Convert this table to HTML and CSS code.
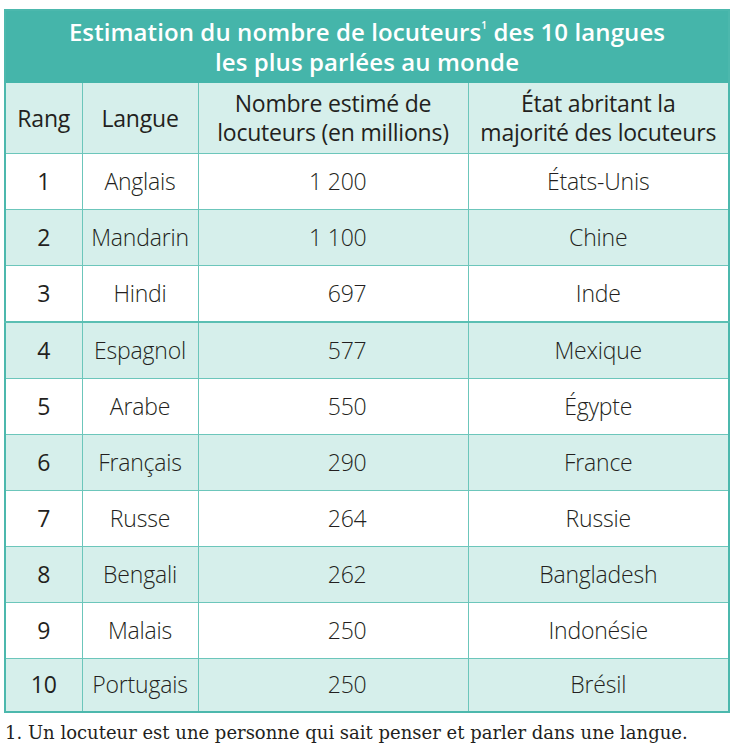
FILE: index.html
```html
<!DOCTYPE html>
<html lang="fr">
<head>
<meta charset="utf-8">
<link rel="stylesheet" href="styles.css">
</head>
<body>
<div class="page">
<table class="langs">
  <colgroup>
    <col class="w-rang">
    <col class="w-lang">
    <col class="w-num">
    <col class="w-etat">
  </colgroup>
  <thead>
    <tr><th class="title" colspan="4">Estimation du nombre de locuteurs<sup>1</sup> des 10 langues<br>les plus parlées au monde</th></tr>
    <tr class="heads">
      <th>Rang</th>
      <th>Langue</th>
      <th>Nombre estimé de<br>locuteurs (en millions)</th>
      <th>État abritant la<br>majorité des locuteurs</th>
    </tr>
  </thead>
  <tbody>
    <tr><td class="c-rang">1</td><td>Anglais</td><td class="c-num">1 200</td><td>États-Unis</td></tr>
    <tr class="alt"><td class="c-rang">2</td><td>Mandarin</td><td class="c-num">1 100</td><td>Chine</td></tr>
    <tr><td class="c-rang">3</td><td>Hindi</td><td class="c-num">697</td><td>Inde</td></tr>
    <tr class="alt thick"><td class="c-rang">4</td><td>Espagnol</td><td class="c-num">577</td><td>Mexique</td></tr>
    <tr><td class="c-rang">5</td><td>Arabe</td><td class="c-num">550</td><td>Égypte</td></tr>
    <tr class="alt"><td class="c-rang">6</td><td>Français</td><td class="c-num">290</td><td>France</td></tr>
    <tr><td class="c-rang">7</td><td>Russe</td><td class="c-num">264</td><td>Russie</td></tr>
    <tr class="alt"><td class="c-rang">8</td><td>Bengali</td><td class="c-num">262</td><td>Bangladesh</td></tr>
    <tr><td class="c-rang">9</td><td>Malais</td><td class="c-num">250</td><td>Indonésie</td></tr>
    <tr class="alt last"><td class="c-rang">10</td><td>Portugais</td><td class="c-num">250</td><td>Brésil</td></tr>
  </tbody>
</table>
<p class="note">1. Un locuteur est une personne qui sait penser et parler dans une langue.</p>
</div>
</body>
</html>
```

FILE: styles.css
```css
html, body {
  margin: 0;
  padding: 0;
  background: #ffffff;
}
.page {
  padding: 9px 5px 0 4px;
  font-family: "Open Sans", Lato, sans-serif;
  color: #231f20;
}
.langs {
  width: 726px;
  border-collapse: collapse;
  border: 2px solid #4cb8ad;
  table-layout: fixed;
}
.w-rang { width: 77px; }
.w-lang { width: 116px; }
.w-num { width: 270px; }
.w-etat { width: auto; }
.langs th, .langs td {
  border: 1px solid #6cc6bb;
  padding: 0;
  text-align: center;
}
.title {
  background: #45b5aa;
  color: #ffffff;
  font-weight: 600;
  font-size: 24px;
  line-height: 30px;
  height: 71px;
  letter-spacing: 0.1px;
  border-color: #45b5aa !important;
}
.title sup {
  font-size: 10px;
  vertical-align: 12px;
  line-height: 0;
}
.heads th {
  background: #d6efeb;
  font-weight: 400;
  font-size: 23px;
  line-height: 29px;
  height: 70px;
  letter-spacing: -0.2px;
}
.langs td {
  font-size: 23px;
  font-weight: 300;
  height: 53px;
  padding-bottom: 2px;
  background: #ffffff;
  letter-spacing: -0.2px;
}
.langs td.c-rang { font-weight: 400; }
.langs td.c-num {
  text-align: right;
  padding-right: 101px;
}
tr.alt td { background: #d6efeb; }
tr.thick td { border-top: 2px solid #5bbfb3; }
.langs tr.last td { height: 50px; }
.note {
  margin: 9px 0 0 1px;
  font-family: "DejaVu Serif", serif;
  font-size: 18px;
  font-weight: 400;
  color: #231f20;
}
```
